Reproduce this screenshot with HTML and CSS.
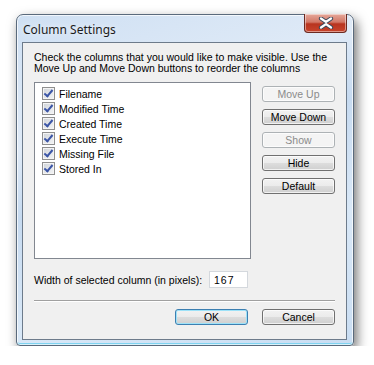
FILE: index.html
```html
<!DOCTYPE html>
<html lang="en">

<head>
    <meta charset="UTF-8">
    <title>Column Settings</title>
    <link rel="stylesheet" href="styles.css">
</head>

<body>
    <!-- WINDOW -->
    <div class="window">
        <div class="titlebar">
            <span class="title">Column Settings</span>
            <button class="close-btn" aria-label="Close">
                <svg width="16" height="12" viewBox="0 0 16 12">
                    <path d="M3 1.5 L8 5 L13 1.5 M3 10.5 L8 7 L13 10.5" fill="none" stroke="#3b4a5c" stroke-width="4.2" stroke-linecap="round" />
                    <path d="M3 1.5 L8 5 L13 1.5 M3 10.5 L8 7 L13 10.5" fill="none" stroke="#fff" stroke-width="2.2" stroke-linecap="round" />
                </svg>
            </button>
        </div>

        <!-- CLIENT AREA -->
        <div class="client">
            <p class="intro">
                Check the columns that you would like to make visible. Use the<br>
                Move Up and Move Down buttons to reorder the columns
            </p>

            <div class="main-row">
                <ul class="column-list">
                    <li><span class="check"></span>Filename</li>
                    <li><span class="check"></span>Modified Time</li>
                    <li><span class="check"></span>Created Time</li>
                    <li><span class="check"></span>Execute Time</li>
                    <li><span class="check"></span>Missing File</li>
                    <li><span class="check"></span>Stored In</li>
                </ul>

                <div class="side-buttons">
                    <button class="btn" disabled>Move Up</button>
                    <button class="btn">Move Down</button>
                    <button class="btn" disabled>Show</button>
                    <button class="btn">Hide</button>
                    <button class="btn">Default</button>
                </div>
            </div>

            <div class="width-row">
                <label for="col-width">Width of selected column (in pixels):</label>
                <input type="text" id="col-width" class="width-inpt" value="167">
            </div>

            <div class="separator"></div>

            <!-- FOOTER -->
            <div class="footer">
                <button class="btn btn-default">OK</button>
                <button class="btn">Cancel</button>
            </div>
        </div>
    </div>
</body>

</html>
```

FILE: styles.css
```css
/* RESET */
* {
    margin: 0;
    padding: 0;
    box-sizing: border-box;
}

body {
    background-color: #FFF;
    font-family: "Liberation Sans", Arial, sans-serif;
    font-size: 10.5px;
    color: #000;
}

/* WINDOW FRAME */
.window {
    width: 338px;
    height: 332px;
    margin: 14px 0 0 16px;
    padding: 0 6px 5px 5px;
    border: 1px solid #5a6a7c;
    border-radius: 7px 7px 4px 4px;
    background: linear-gradient(160deg, #cfe0f3 0%, #dfeaf7 30%, #c6daf0 45%, #d9e8f7 70%, #c9ddf2 100%);
    box-shadow: 3px 5px 12px rgba(0, 0, 0, .55), inset 0 0 0 1px rgba(255, 255, 255, .7), inset 0 -2px 0 #7fd3f0;
    display: flex;
    flex-direction: column;
}

.titlebar {
    height: 27px;
    flex-shrink: 0;
    display: flex;
    align-items: flex-start;
    justify-content: space-between;
}

.title {
    font-family: "Noto Sans", "Open Sans", sans-serif;
    font-size: 12px;
    color: #1b1b1b;
    margin: 6px 0 0 1px;
    text-shadow: 0 0 6px rgba(255, 255, 255, .9);
}

.close-btn {
    width: 43px;
    height: 19px;
    margin-top: -1px;
    border: 1px solid #6b2a22;
    border-top: none;
    border-radius: 0 0 4px 4px;
    background: linear-gradient(#e6a89a 0%, #d27766 45%, #b8341f 55%, #c8442c 100%);
    box-shadow: inset 0 0 0 1px rgba(255, 255, 255, .45);
    display: flex;
    align-items: center;
    justify-content: center;
}

/* CLIENT AREA */
.client {
    flex: 1;
    min-height: 0;
    background-color: #F0F0F0;
    border: 1px solid #6d7b8b;
    padding: 9px 11px 0 11px;
}

.intro {
    line-height: 11px;
    margin-bottom: 8px;
    white-space: nowrap;
}

.main-row {
    display: flex;
    gap: 11px;
}

.column-list {
    list-style: none;
    width: 218px;
    height: 177px;
    background-color: #FFF;
    border: 1px solid #828790;
    padding: 3px 0 0 7px;
}

.column-list li {
    display: flex;
    align-items: center;
    height: 15px;
}

.check {
    width: 13px;
    height: 13px;
    margin-right: 4px;
    border: 1px solid #8f8f8f;
    background: linear-gradient(135deg, #cfd3d8 0%, #e6e8eb 60%, #f3f4f5 100%);
    box-shadow: inset 0 0 0 1px #f4f4f4;
    position: relative;
}

.check::after {
    content: "";
    position: absolute;
    left: 3px;
    top: 0px;
    width: 3px;
    height: 7px;
    border: solid #3b55a6;
    border-width: 0 2px 2px 0;
    transform: rotate(40deg);
}

.side-buttons {
    display: flex;
    flex-direction: column;
    gap: 7px;
    padding-top: 4px;
}

/* BUTTONS */
.btn {
    width: 73px;
    height: 16px;
    font-family: "Liberation Sans", Arial, sans-serif;
    font-size: 10.5px;
    color: #000;
    border: 1px solid #707070;
    border-radius: 3px;
    background: linear-gradient(#f2f2f2 0%, #ebebeb 50%, #dddddd 51%, #cfcfcf 100%);
    box-shadow: inset 0 0 0 1px rgba(255, 255, 255, .7);
}

.btn:disabled {
    color: #8b8b8b;
    border-color: #adb2b5;
    background: #F4F4F4;
}

.btn-default {
    border-color: #3c7fb1;
    box-shadow: inset 0 0 0 1px #9ee2f8;
}

.width-row {
    display: flex;
    align-items: center;
    margin-top: 12px;
}

.width-row label {
    width: 175px;
    white-space: nowrap;
}

.width-inpt {
    width: 39px;
    height: 17px;
    border: 1px solid #d4d8dd;
    padding-left: 4px;
    font-family: "Liberation Sans", Arial, sans-serif;
    font-size: 10.5px;
    letter-spacing: 1px;
}

.separator {
    height: 2px;
    margin-top: 12px;
    border-top: 1px solid #a0a0a0;
    border-bottom: 1px solid #FFF;
}

.footer {
    display: flex;
    justify-content: flex-end;
    gap: 14px;
    margin-top: 7px;
}
```
